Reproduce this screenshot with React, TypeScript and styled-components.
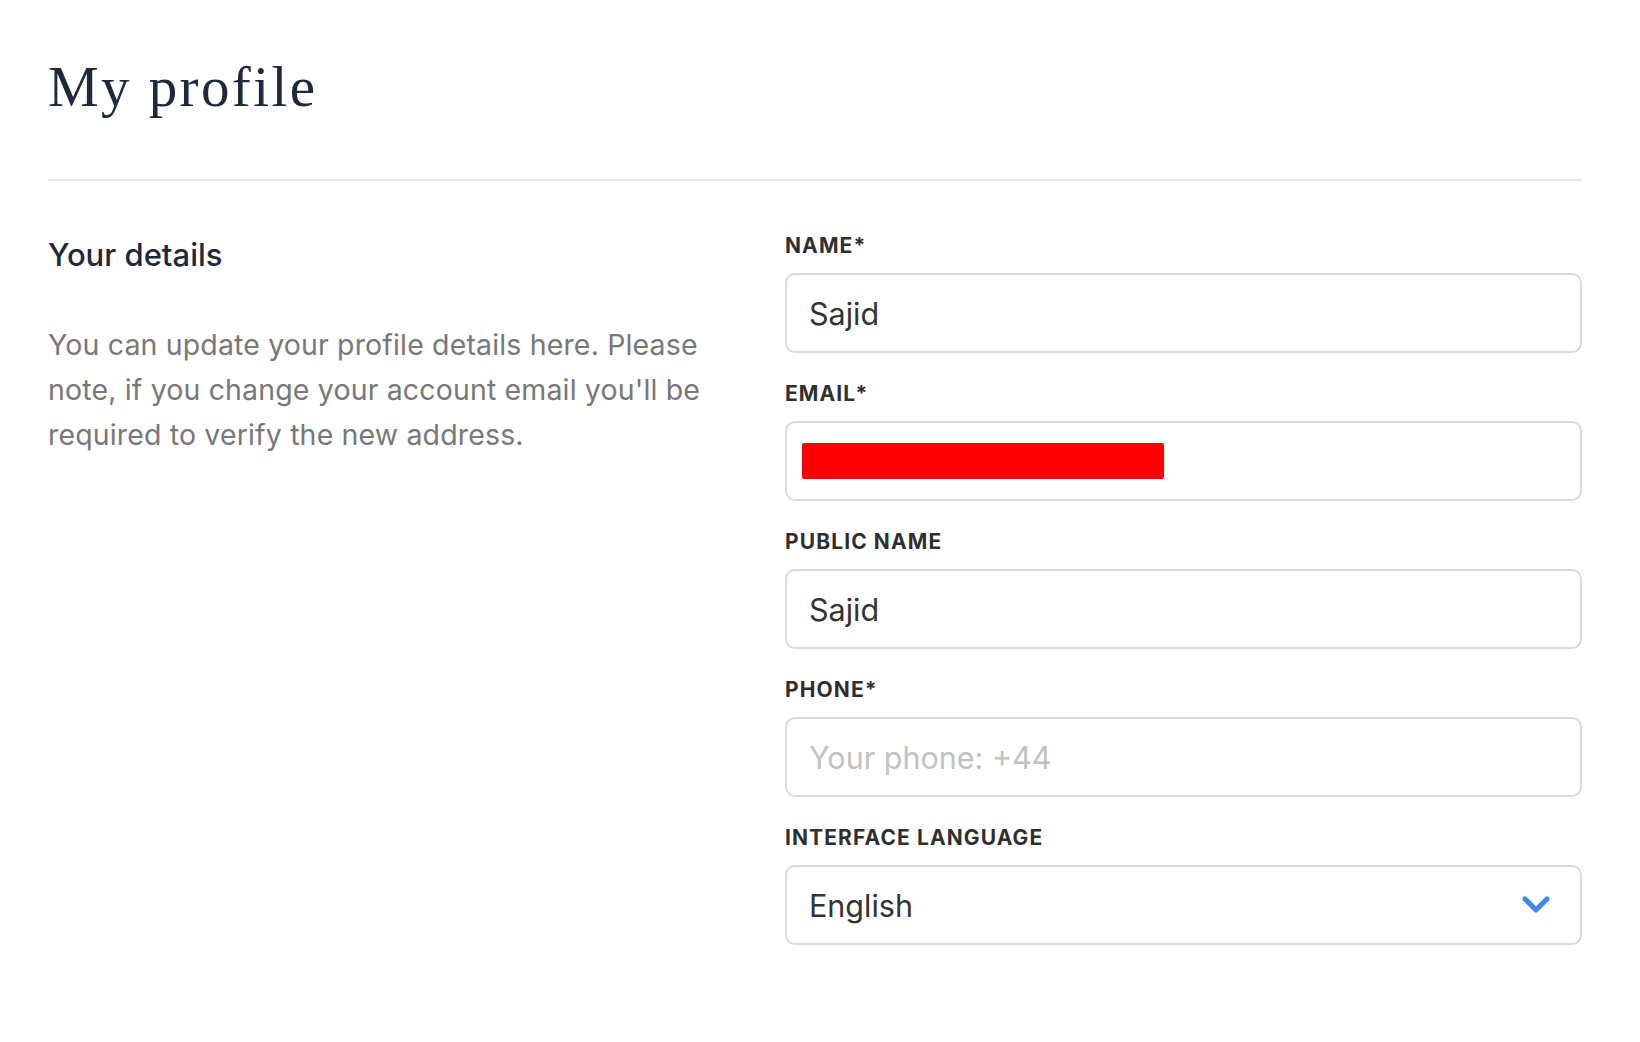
import styled, { createGlobalStyle } from "styled-components";

const GlobalStyle = createGlobalStyle`
  html, body {
    margin: 0;
    padding: 0;
    background: #ffffff;
  }
  body {
    font-family: Inter, "Noto Sans", sans-serif;
  }
`;

const Page = styled.div`
  padding: 53px 58px 60px 48px;
`;

const Title = styled.h1`
  margin: 0;
  font-family: "Liberation Serif", serif;
  font-weight: 400;
  font-size: 57px;
  line-height: 68px;
  letter-spacing: 2.4px;
  color: #1e293b;
`;

const Divider = styled.hr`
  margin: 58px 0 0;
  border: none;
  border-top: 2px solid #e6e7e9;
`;

const Section = styled.section`
  display: grid;
  grid-template-columns: 737px 1fr;
  padding-top: 52px;
`;

const Intro = styled.div`
  display: flex;
  flex-direction: column;
  padding-right: 40px;
`;

const Heading = styled.h2`
  margin: 0;
  font-size: 31px;
  line-height: 44px;
  font-weight: 500;
  color: #1e293b;
`;

const Description = styled.p`
  margin: 45px 0 0;
  font-size: 28.5px;
  line-height: 45px;
  letter-spacing: 0.15px;
  color: #787878;
`;

const Form = styled.form`
  display: flex;
  flex-direction: column;
  gap: 28px;
`;

const Field = styled.div`
  display: flex;
  flex-direction: column;
  gap: 14px;
`;

const Label = styled.label`
  font-size: 21px;
  line-height: 26px;
  font-weight: 700;
  letter-spacing: 1.1px;
  color: #2f2f2f;
`;

const Box = styled.div`
  position: relative;
  display: flex;
  align-items: center;
  height: 80px;
  box-sizing: border-box;
  border: 2px solid #dadada;
  border-radius: 10px;
  background: #fff;
`;

const Input = styled.input`
  flex: 1;
  min-width: 0;
  height: 100%;
  box-sizing: border-box;
  border: none;
  outline: none;
  background: transparent;
  padding: 0 22px;
  font-family: Inter, "Noto Sans", sans-serif;
  font-size: 30.5px;
  color: #333333;
  border-radius: 10px;

  &::placeholder {
    color: #c2c2c2;
  }
`;

const Redaction = styled.span`
  position: absolute;
  left: 15px;
  top: 50%;
  transform: translateY(-50%);
  width: 362px;
  height: 36px;
  border-radius: 2px;
  background: #ff0000;
`;

const SelectValue = styled.span`
  flex: 1;
  padding: 0 22px;
  font-size: 30.5px;
  color: #333333;
`;

const Chevron = styled.svg`
  width: 30px;
  height: 22px;
  margin-right: 29px;
`;

const fields = [
  { label: "NAME*", value: "Sajid" },
  { label: "EMAIL*", value: "", redacted: true },
  { label: "PUBLIC NAME", value: "Sajid" },
  { label: "PHONE*", value: "", placeholder: "Your phone: +44" },
];

function App() {
  return (
    <Page>
      <GlobalStyle />
      <Title>My profile</Title>
      <Divider />
      <Section>
        <Intro>
          <Heading>Your details</Heading>
          <Description>
            You can update your profile details here. Please note, if you change your account
            email you'll be required to verify the new address.
          </Description>
        </Intro>
        <Form onSubmit={(e) => e.preventDefault()}>
          {fields.map((f) => (
            <Field key={f.label}>
              <Label>{f.label}</Label>
              <Box>
                <Input defaultValue={f.value} placeholder={f.placeholder} readOnly={f.redacted} />
                {f.redacted && <Redaction />}
              </Box>
            </Field>
          ))}
          <Field>
            <Label>INTERFACE LANGUAGE</Label>
            <Box>
              <SelectValue>English</SelectValue>
              <Chevron viewBox="0 0 30 22">
                <path
                  d="M4 5 L15 16 L26 5"
                  fill="none"
                  stroke="#3b8af2"
                  strokeWidth="5"
                  strokeLinecap="round"
                  strokeLinejoin="round"
                />
              </Chevron>
            </Box>
          </Field>
        </Form>
      </Section>
    </Page>
  );
}

export default App;
